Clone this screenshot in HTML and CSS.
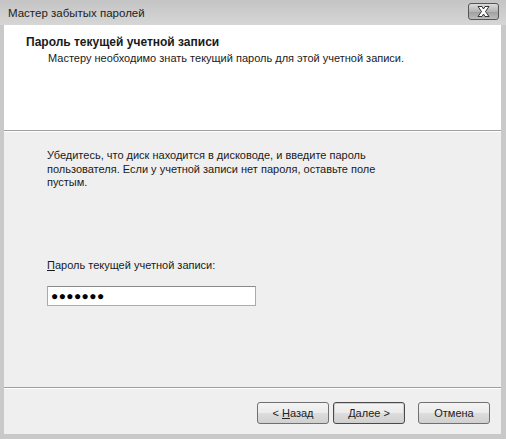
FILE: index.html
```html
<!DOCTYPE html>
<html>
<head>
<meta charset="utf-8">
<title>Мастер забытых паролей</title>
<link rel="stylesheet" href="styles.css">
</head>
<body>
<div class="window">
  <div class="titlebar">
    <span class="caption">Мастер забытых паролей</span>
    <span class="close">
      <svg width="29" height="15" viewBox="0 0 29 15">
        <path d="M9 2.5 L13 2.5 L14.5 5 L16 2.5 L20 2.5 L16.5 7.5 L20 12.5 L16 12.5 L14.5 10 L13 12.5 L9 12.5 L12.5 7.5 Z" fill="#ffffff" stroke="#333" stroke-width="1" stroke-linejoin="round"/>
      </svg>
    </span>
  </div>
  <div class="client">
    <div class="header">
      <div class="head-title">Пароль текущей учетной записи</div>
      <div class="head-sub">Мастеру необходимо знать текущий пароль для этой учетной записи.</div>
    </div>
    <div class="content">
      <p class="intro">Убедитесь, что диск находится в дисководе, и введите пароль пользователя. Если у учетной записи нет пароля, оставьте поле пустым.</p>
      <div class="field">
        <label class="field-label"><u>П</u>ароль текущей учетной записи:</label>
        <div class="password">&#9679;&#9679;&#9679;&#9679;&#9679;&#9679;&#9679;</div>
      </div>
    </div>
    <div class="footer">
      <span class="btn">&lt;&nbsp;<u>Н</u>азад</span>
      <span class="btn default"><u>Д</u>алее&nbsp;&gt;</span>
      <span class="btn cancel">Отмена</span>
    </div>
  </div>
</div>
</body>
</html>
```

FILE: styles.css
```css
/* Wizard dialog */

html, body
{ margin: 0;
padding: 0;
}

body
{ width: 506px;
height: 439px;
overflow: hidden;
font-family: "Liberation Sans", "DejaVu Sans", sans-serif;
font-size: 11px;
color: #1a1a1a;
}

div.window
{ box-sizing: border-box;
width: 506px;
height: 439px;
padding: 0 5px 5px 4px;
background: #c9c9c9;
display: flex;
flex-direction: column;
}

div.titlebar
{ height: 25px;
margin-left: -4px;
margin-right: -5px;
padding: 0 7px 0 8px;
display: flex;
align-items: center;
justify-content: space-between;
background: linear-gradient(to bottom, #c4c4c4, #d6d6d6);
}

span.caption
{ font-size: 11.5px;
color: #222;
padding-top: 1px;
}

span.close
{ box-sizing: border-box;
width: 31px;
height: 17px;
border: 1px solid #555;
border-radius: 3px;
background: linear-gradient(to bottom, #dcdcdc, #b4b4b4 50%, #9e9e9e 51%, #bcbcbc);
display: flex;
align-items: center;
justify-content: center;
margin-top: -2px;
}

div.client
{ flex: 1;
display: flex;
flex-direction: column;
background: #efefef;
}

div.header
{ height: 106px;
box-sizing: border-box;
padding: 10px 0 0 22px;
background: #ffffff;
border-bottom: 1px solid #a0a0a0;
box-shadow: 0 1px 0 #ffffff;
}

div.head-title
{ font-weight: bold;
font-size: 12px;
line-height: 15px;
}

div.head-sub
{ margin-left: 22px;
margin-top: 1px;
line-height: 15px;
}

div.content
{ flex: 1;
padding: 17px 0 0 43px;
margin-top: 1px;
border-bottom: 1px solid #a0a0a0;
box-shadow: 0 1px 0 #ffffff;
}

p.intro
{ margin: 0;
width: 330px;
line-height: 13.5px;
}

div.field
{ margin-top: 68px;
}

label.field-label
{ display: block;
line-height: 15px;
}

div.password
{ box-sizing: border-box;
width: 209px;
height: 20px;
margin-top: 13px;
padding: 0 0 0 3px;
background: #ffffff;
border: 1px solid #ababab;
border-top-color: #8a8a8a;
font-size: 12px;
line-height: 18px;
letter-spacing: 0.4px;
color: #000;
}

div.footer
{ height: 45px;
box-sizing: border-box;
margin-top: 1px;
padding: 13px 11px 0 0;
display: flex;
justify-content: flex-end;
align-items: flex-start;
gap: 4px;
}

span.btn
{ box-sizing: border-box;
width: 72px;
height: 22px;
border: 1px solid #707070;
border-radius: 3px;
background: linear-gradient(to bottom, #f4f4f4, #ebebeb 50%, #dddddd 51%, #d0d0d0);
display: flex;
align-items: center;
justify-content: center;
color: #222;
}

span.btn.default
{ border-color: #4a4a4a;
box-shadow: inset 0 0 0 1px #cfcfcf;
}

span.btn.cancel
{ margin-left: 9px;
}
```
